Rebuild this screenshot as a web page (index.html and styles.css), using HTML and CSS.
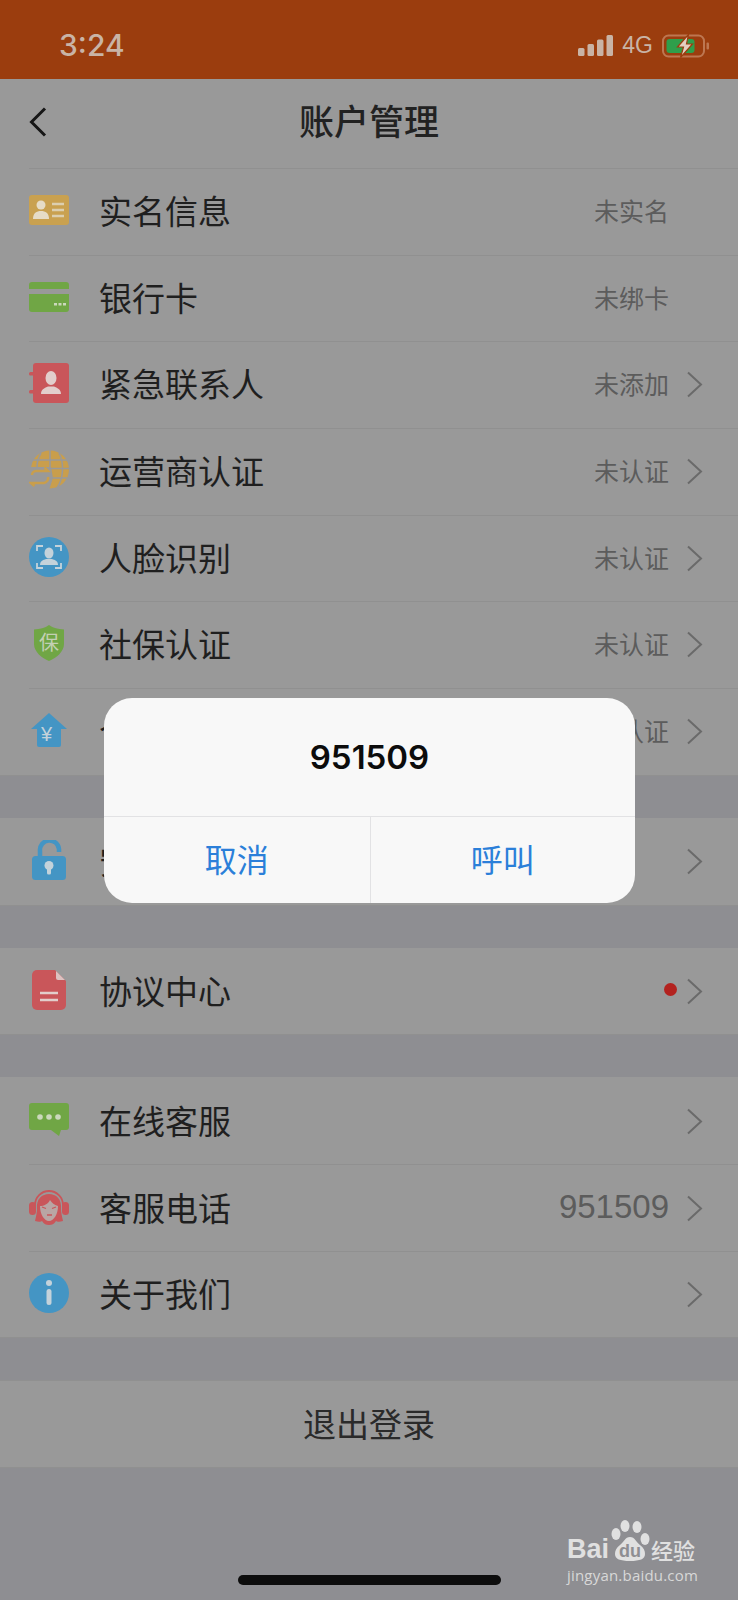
FILE: index.html
```html
<!DOCTYPE html>
<html lang="zh-CN">

<head>
  <meta charset="UTF-8">
  <meta name="viewport" content="width=device-width, initial-scale=1.0">
  <title>账户管理</title>
  <link rel="stylesheet" href="styles.css">
</head>

<body>
  <div class="phone">
    <div class="status-bar">
      <span class="status-time">3:24</span>
      <div class="status-icons">
        <svg class="signal" width="35" height="21" viewBox="0 0 35 21">
          <rect x="0" y="13" width="6.500" height="8" rx="1.500" />
          <rect x="9.500" y="9" width="6.500" height="12" rx="1.500" />
          <rect x="19" y="4.500" width="6.500" height="16.500" rx="1.500" />
          <rect x="28.500" y="0" width="6.500" height="21" rx="1.500" />
        </svg>
        <span class="network">4G</span>
        <svg class="battery" width="48" height="24" viewBox="0 0 48 24">
          <rect x="1" y="1.500" width="41" height="21" rx="5.500" fill="none" stroke="#bd7751" stroke-width="2" />
          <rect x="4.500" y="5" width="28" height="14" rx="3" fill="#2f9f4b" />
          <rect x="44.500" y="8.500" width="2.500" height="7" rx="1" fill="#bd7751" />
          <path d="M26.500 0.500 L15.500 13 L21.500 13 L18.500 23.500 L30.500 10 L24.500 10 Z" fill="#e3d0c2" stroke="#9b3d0e" stroke-width="1.200" />
        </svg>
      </div>
    </div>

    <div class="nav-bar">
      <svg class="back" width="18" height="30" viewBox="0 0 18 30">
        <path d="M16 1.500 L2.500 15 L16 28.500" />
      </svg>
      <h1 class="nav-title">账户管理</h1>
    </div>

    <div class="group">
      <div class="row">
        <svg class="row-icon" viewBox="0 0 40 30" width="40" height="30">
          <rect width="40" height="30" rx="3" fill="#c9a150" />
          <circle cx="12" cy="10" r="4.500" fill="#e6dcc6" />
          <path d="M4 24c0-6 3.500-8 8-8s8 2 8 8z" fill="#e6dcc6" />
          <path d="M23 9h12M23 15h12M23 21h12" stroke="#dccfb0" stroke-width="2.500" />
        </svg>
        <span class="row-label">实名信息</span>
        <span class="row-value">未实名</span>
        <span class="chevron-slot"></span>
      </div>
      <div class="row">
        <svg class="row-icon" viewBox="0 0 40 30" width="40" height="30">
          <path d="M3 0h34a3 3 0 0 1 3 3v4H0V3a3 3 0 0 1 3-3zM0 12h40v15a3 3 0 0 1-3 3H3a3 3 0 0 1-3-3z" fill="#70a645" />
          <path d="M25 21h3v2.500h-3zM29.500 21h3v2.500h-3zM34 21h3v2.500h-3z" fill="#cbd8bc" />
        </svg>
        <span class="row-label">银行卡</span>
        <span class="row-value">未绑卡</span>
        <span class="chevron-slot"></span>
      </div>
      <div class="row">
        <svg class="row-icon" viewBox="0 0 40 40" width="40" height="40">
          <rect x="4" y="0" width="36" height="40" rx="3" fill="#c9565a" />
          <rect x="0" y="9" width="6" height="3.500" rx="1.500" fill="#c9565a" />
          <rect x="0" y="27" width="6" height="3.500" rx="1.500" fill="#c9565a" />
          <ellipse cx="22" cy="15" rx="5.500" ry="7" fill="#e2cecc" />
          <path d="M12 31c0-5 4-6 7-7.500h6c3 1.500 7 2.500 7 7.500z" fill="#e2cecc" />
        </svg>
        <span class="row-label">紧急联系人</span>
        <span class="row-value">未添加</span>
        <svg class="chevron" width="17" height="27" viewBox="0 0 17 27"><path d="M2 1.500 L15 13.500 L2 25.500" /></svg>
      </div>
      <div class="row">
        <svg class="row-icon" viewBox="0 0 40 40" width="40" height="40">
          <circle cx="21" cy="19.500" r="19" fill="#c99e4c" />
          <path d="M-1 17H22L24 28 L20 40H-1z" fill="#999" />
          <path d="M21 0v17M12 3C9 8 8 12 8 17M30 3c5 9 5 25-2 35M4 10h34M22 18.500h19M24 28h14" fill="none" stroke="#999" stroke-width="1.500" />
          <path d="M3 25a4 4 0 0 1 4-4h12l-3.500-3.500M19 27a5 5 0 0 1-4 6H2l3.500 3" fill="none" stroke="#c99e4c" stroke-width="2.500" />
        </svg>
        <span class="row-label">运营商认证</span>
        <span class="row-value">未认证</span>
        <svg class="chevron" width="17" height="27" viewBox="0 0 17 27"><path d="M2 1.500 L15 13.500 L2 25.500" /></svg>
      </div>
      <div class="row">
        <svg class="row-icon" viewBox="0 0 40 40" width="40" height="40">
          <circle cx="20" cy="20" r="20" fill="#4495c4" />
          <path d="M8 14V9h6M26 9h6v5M32 26v5h-6M14 31H8v-5" fill="none" stroke="#c4d2da" stroke-width="1.800" />
          <ellipse cx="20" cy="16" rx="4.500" ry="5.500" fill="#c4d2da" />
          <path d="M11 28c0-4 3-5 6-6h6c3 1 6 2 6 6z" fill="#c4d2da" />
        </svg>
        <span class="row-label">人脸识别</span>
        <span class="row-value">未认证</span>
        <svg class="chevron" width="17" height="27" viewBox="0 0 17 27"><path d="M2 1.500 L15 13.500 L2 25.500" /></svg>
      </div>
      <div class="row">
        <span class="shield-icon">
          <svg viewBox="0 0 30 36" width="30" height="36">
            <path d="M15 0 C19 3 24 4 30 4.500 V19 C30 27 22 33 15 36 C8 33 0 27 0 19 V4.500 C6 4 11 3 15 0z" fill="#70a645" />
          </svg>
          <span class="shield-text">保</span>
        </span>
        <span class="row-label">社保认证</span>
        <span class="row-value">未认证</span>
        <svg class="chevron" width="17" height="27" viewBox="0 0 17 27"><path d="M2 1.500 L15 13.500 L2 25.500" /></svg>
      </div>
      <div class="row">
        <span class="house-icon">
          <svg viewBox="0 0 36 34" width="36" height="34">
            <path d="M18 0 L36 16 H30 V32 a2 2 0 0 1-2 2 H8 a2 2 0 0 1-2-2 V16 H0z" fill="#4495c4" />
          </svg>
          <span class="house-text">¥</span>
        </span>
        <span class="row-label">个人公积金</span>
        <span class="row-value">未认证</span>
        <svg class="chevron" width="17" height="27" viewBox="0 0 17 27"><path d="M2 1.500 L15 13.500 L2 25.500" /></svg>
      </div>
    </div>

    <div class="group">
      <div class="row">
        <svg class="row-icon" viewBox="0 0 40 40" width="40" height="40">
          <path d="M11 19V11a9.500 9.500 0 0 1 19-2v3" fill="none" stroke="#4495c4" stroke-width="4.500" />
          <rect x="3" y="16" width="34" height="24" rx="3.500" fill="#4495c4" />
          <circle cx="20" cy="25.500" r="4.500" fill="#c4d2da" />
          <rect x="18" y="27" width="4" height="7.500" rx="1.500" fill="#c4d2da" />
        </svg>
        <span class="row-label">安全设置</span>
        <svg class="chevron" width="17" height="27" viewBox="0 0 17 27"><path d="M2 1.500 L15 13.500 L2 25.500" /></svg>
      </div>
    </div>

    <div class="group">
      <div class="row">
        <svg class="row-icon" viewBox="0 0 40 40" width="40" height="40">
          <path d="M8 0h18l11 11v24a5 5 0 0 1-5 5H8a5 5 0 0 1-5-5V5a5 5 0 0 1 5-5z" fill="#c9565a" />
          <path d="M27 1l9 9h-7a2 2 0 0 1-2-2z" fill="#dcc2c1" />
          <path d="M11 23h18M11 30h18" stroke="#e2cecc" stroke-width="2.500" />
        </svg>
        <span class="row-label">协议中心</span>
        <span class="red-dot"></span>
        <svg class="chevron" width="17" height="27" viewBox="0 0 17 27"><path d="M2 1.500 L15 13.500 L2 25.500" /></svg>
      </div>
    </div>

    <div class="group">
      <div class="row">
        <svg class="row-icon" viewBox="0 0 40 34" width="40" height="34">
          <path d="M3 0h34a3 3 0 0 1 3 3v21a3 3 0 0 1-3 3H32l-2 6-8-6H3a3 3 0 0 1-3-3V3a3 3 0 0 1 3-3z" fill="#70a645" />
          <circle cx="11" cy="14" r="2.800" fill="#cbd8bc" />
          <circle cx="20" cy="14" r="2.800" fill="#cbd8bc" />
          <circle cx="29" cy="14" r="2.800" fill="#cbd8bc" />
        </svg>
        <span class="row-label">在线客服</span>
        <svg class="chevron" width="17" height="27" viewBox="0 0 17 27"><path d="M2 1.500 L15 13.500 L2 25.500" /></svg>
      </div>
      <div class="row">
        <svg class="row-icon" viewBox="0 0 40 36" width="40" height="36">
          <path d="M6 16a14 14 0 0 1 28 0" fill="none" stroke="#c9565a" stroke-width="1.800" />
          <rect x="0" y="13" width="7" height="13" rx="3.500" fill="#c9565a" />
          <rect x="33" y="13" width="7" height="13" rx="3.500" fill="#c9565a" />
          <path d="M8 20C7 10 13 5 20 5s13 5 12 15c0 3 1 8 2 12-3 1-6 1-7 0-2 3-4 4-7 4s-5-1-7-4c-1 1-4 1-7 0 1-4 2-9 2-12z" fill="#c9565a" />
          <path d="M11 17c4 0 8-2 10-6 2 3 4 5 8 6 0 8-4 15-9 15s-9-7-9-15z" fill="#b9a6a4" />
          <path d="M13 18l4 1.500M23 19.500l4-1.500M18 26h5" stroke="#c9565a" stroke-width="1.300" fill="none" />
        </svg>
        <span class="row-label">客服电话</span>
        <span class="row-value row-value-number">951509</span>
        <svg class="chevron" width="17" height="27" viewBox="0 0 17 27"><path d="M2 1.500 L15 13.500 L2 25.500" /></svg>
      </div>
      <div class="row">
        <svg class="row-icon" viewBox="0 0 40 40" width="40" height="40">
          <circle cx="20" cy="20" r="20" fill="#4495c4" />
          <circle cx="20" cy="10" r="3" fill="#c4d2da" />
          <rect x="17.500" y="16" width="5" height="16" rx="2.500" fill="#c4d2da" />
        </svg>
        <span class="row-label">关于我们</span>
        <svg class="chevron" width="17" height="27" viewBox="0 0 17 27"><path d="M2 1.500 L15 13.500 L2 25.500" /></svg>
      </div>
    </div>

    <div class="group">
      <div class="logout">退出登录</div>
    </div>

    <div class="home-bar"></div>

    <div class="watermark">
      <div class="wm-logo">
        <span class="wm-bai">Bai</span>
        <span class="wm-paw">
          <svg width="40" height="42" viewBox="0 0 40 42">
            <ellipse cx="6" cy="14" rx="4.500" ry="6" />
            <ellipse cx="15" cy="6" rx="4.500" ry="6" />
            <ellipse cx="27" cy="7" rx="4.500" ry="6" />
            <ellipse cx="35" cy="19" rx="4.500" ry="6" />
            <path d="M20 17c5 0 6 5 10 8 4 3 5 6 5 9 0 5-5 7-15 7S5 39 5 34c0-3 1-6 5-9 4-3 5-8 10-8z" />
          </svg>
          <span class="wm-du">du</span>
        </span>
        <span class="wm-cn">经验</span>
      </div>
      <div class="wm-url">jingyan.baidu.com</div>
    </div>

    <div class="dialog">
      <div class="dialog-title">951509</div>
      <div class="dialog-actions">
        <div class="dialog-btn">取消</div>
        <div class="dialog-btn">呼叫</div>
      </div>
    </div>
  </div>
</body>
</html>
```

FILE: styles.css
```css
* {
	box-sizing: border-box;
}

body {
	margin: 0;
	padding: 0;
	background: #8e8e92;
	font-family: "Noto Sans CJK SC", "Liberation Sans", sans-serif;
}

.phone {
	position: relative;
	width: 738px;
	height: 1600px;
	overflow: hidden;
	background: #8e8e92;
}

.status-bar {
	display: flex;
	align-items: center;
	justify-content: space-between;
	height: 79px;
	padding: 11px 28px 0 59px;
	background: #9b3d0e;
	color: #c9b4a6;
}

.status-time {
	font-family: "Inter", sans-serif;
	font-size: 30px;
	font-weight: 500;
}

.status-icons {
	display: flex;
	align-items: center;
	padding-top: 1px;
}

.signal {
	fill: #c9b4a6;
}

.network {
	margin: 0 9px;
	font-family: "Liberation Sans", sans-serif;
	font-size: 23px;
}

.nav-bar {
	position: relative;
	display: flex;
	align-items: center;
	justify-content: center;
	height: 89px;
	background: #999;
}

.back {
	position: absolute;
	left: 29px;
	top: 28px;
	fill: none;
	stroke: #161616;
	stroke-width: 3;
}

.nav-title {
	margin: 0 0 8px;
	font-size: 35px;
	font-weight: 500;
	color: #222;
}

.group {
	margin-bottom: 42px;
	background: #999;
	border-bottom: 1px solid #909090;
}

.row {
	display: flex;
	align-items: center;
	height: 86.7px;
	margin-left: 29px;
	padding: 0 35px 4px 0;
	border-top: 1px solid #909090;
}

.group + .group .row {
	padding-bottom: 2px;
}

.group .row:first-child {
	border-top: none;
}

.nav-bar + .group .row:first-child {
	border-top: 1px solid #909090;
}

.row-icon {
	flex: none;
}

.row-label {
	margin-left: 30px;
	font-size: 33px;
	color: #1f1f1f;
	flex: 1;
}

.row-value {
	margin-right: 17px;
	font-size: 25px;
	color: #5c5c5c;
}

.row-value-number {
	font-family: "Liberation Sans", sans-serif;
	font-size: 33px;
}

.chevron,
.chevron-slot {
	flex: none;
	width: 17px;
}

.chevron {
	margin-top: 3px;
	fill: none;
	stroke: #6a6a6a;
	stroke-width: 2;
}

.red-dot {
	width: 13px;
	height: 13px;
	margin-right: 9px;
	border-radius: 50%;
	background: #b3221f;
}

.shield-icon,
.house-icon {
	position: relative;
	display: flex;
	justify-content: center;
	flex: none;
	width: 40px;
}

.shield-text {
	position: absolute;
	top: 4px;
	left: 10px;
	font-size: 20px;
	line-height: 26px;
	color: #c3d0b4;
}

.house-text {
	position: absolute;
	top: 11px;
	left: 12px;
	font-family: "Liberation Sans", sans-serif;
	font-size: 20px;
	line-height: 20px;
	color: #c4d2da;
}

.logout {
	display: flex;
	align-items: center;
	justify-content: center;
	height: 86.7px;
	padding-bottom: 2px;
	border-top: 1px solid #909090;
	font-size: 33px;
	color: #2a2a2a;
}

.home-bar {
	position: absolute;
	left: 238px;
	top: 1575px;
	width: 263px;
	height: 10px;
	border-radius: 5px;
	background: #0d0d0d;
}

.watermark {
	position: absolute;
	left: 567px;
	top: 1520px;
	width: 134px;
	color: #e0e0e0;
}

.wm-logo {
	display: flex;
	align-items: flex-end;
	height: 42px;
}

.wm-bai {
	font-family: "Liberation Sans", sans-serif;
	font-size: 27px;
	line-height: 25px;
	font-weight: bold;
}

.wm-paw {
	position: relative;
	display: block;
	height: 42px;
	margin-left: 1px;
	fill: #e0e0e0;
}

.wm-du {
	position: absolute;
	left: 9px;
	top: 22px;
	font-family: "Liberation Sans", sans-serif;
	font-size: 18px;
	line-height: 18px;
	font-weight: bold;
	color: #8e8e92;
}

.wm-cn {
	margin-left: 1px;
	font-size: 22px;
	line-height: 26px;
	font-weight: 500;
}

.wm-url {
	margin-top: 2px;
	font-family: "Open Sans", sans-serif;
	font-size: 15px;
	line-height: 22px;
	letter-spacing: 0.2px;
	white-space: nowrap;
	color: #d8d8d8;
}

.dialog {
	position: absolute;
	left: 104px;
	top: 698px;
	width: 531px;
	height: 205px;
	border-radius: 28px;
	background: #f8f8f8;
	overflow: hidden;
}

.dialog-title {
	display: flex;
	align-items: center;
	justify-content: center;
	height: 118px;
	font-family: "Inter", sans-serif;
	font-size: 33px;
	font-weight: 600;
	color: #0c0c0c;
}

.dialog-actions {
	display: grid;
	grid-template-columns: 1fr 1fr;
	height: 87px;
	border-top: 1px solid #e2e2e4;
}

.dialog-btn {
	display: flex;
	align-items: center;
	justify-content: center;
	padding: 0 0 4px;
	font-size: 32px;
	color: #2b7fd9;
}

.dialog-btn + .dialog-btn {
	border-left: 1px solid #e2e2e4;
}
```
